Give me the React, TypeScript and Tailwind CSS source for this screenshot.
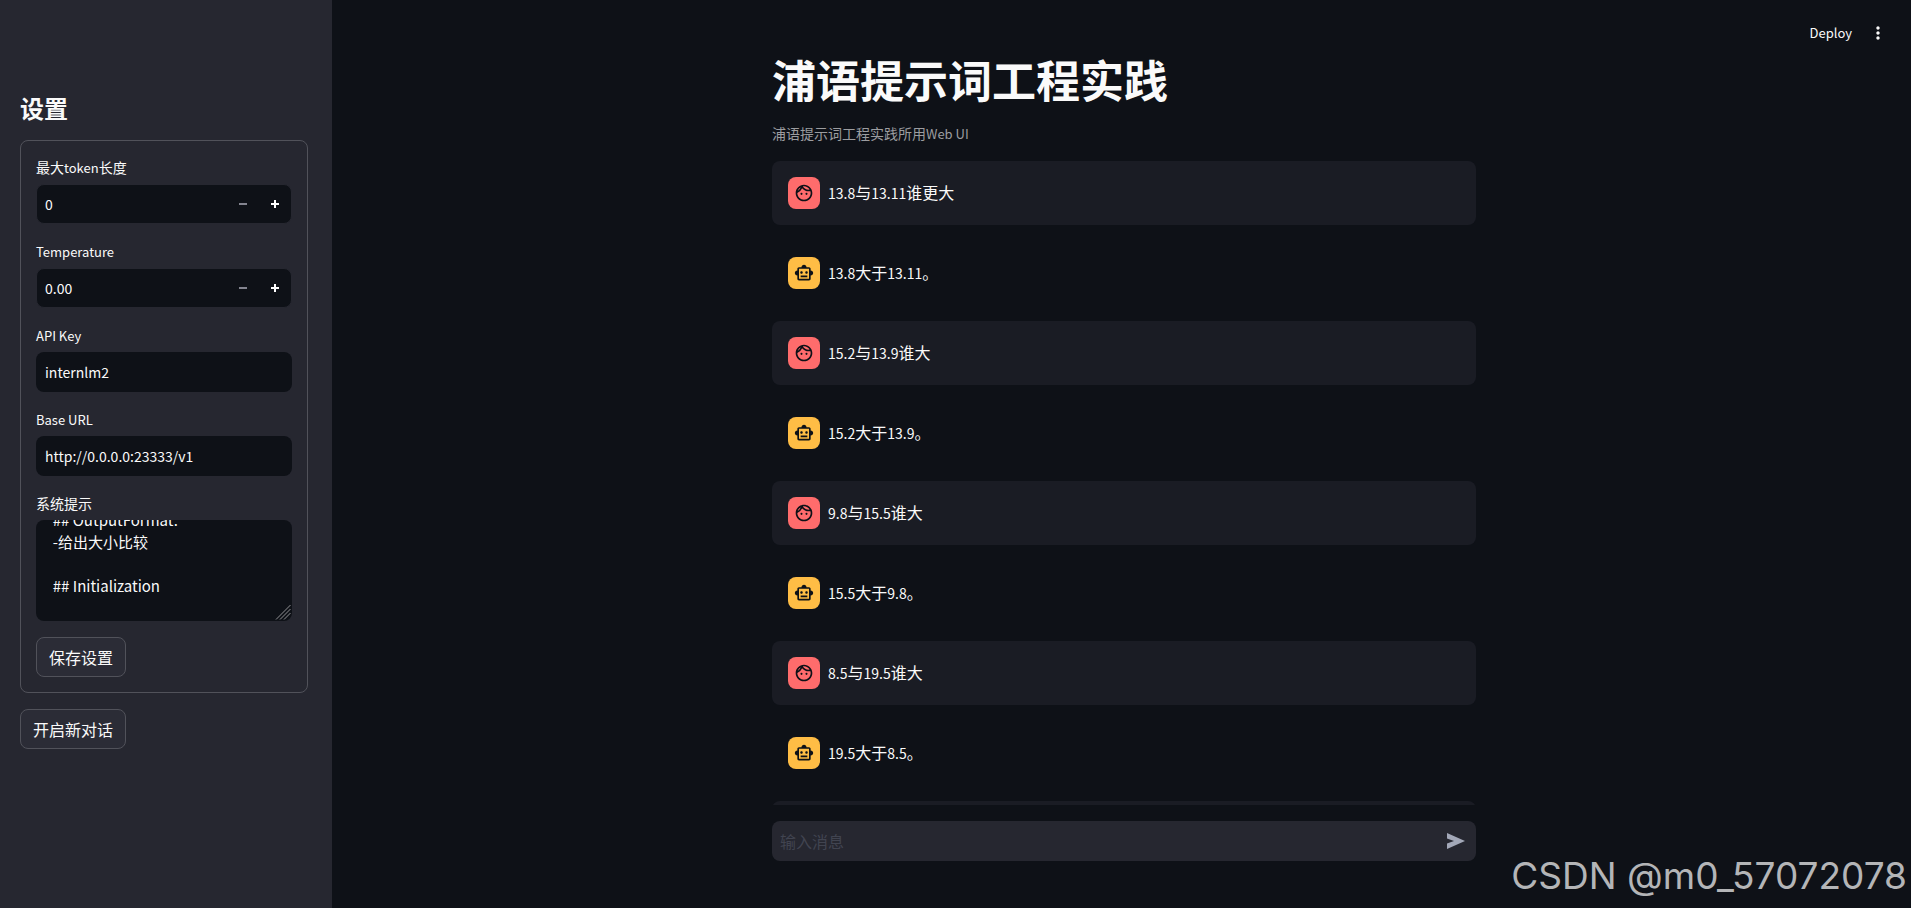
import React, { useEffect, useRef, useState } from 'react';
import { MdMoreVert, MdOutlineFace, MdOutlineSmartToy } from 'react-icons/md';

interface Message {
  role: 'user' | 'assistant';
  content: string;
}

const messages: Message[] = [
  { role: 'user', content: '13.8与13.11谁更大' },
  { role: 'assistant', content: '13.8大于13.11。' },
  { role: 'user', content: '15.2与13.9谁大' },
  { role: 'assistant', content: '15.2大于13.9。' },
  { role: 'user', content: '9.8与15.5谁大' },
  { role: 'assistant', content: '15.5大于9.8。' },
  { role: 'user', content: '8.5与19.5谁大' },
  { role: 'assistant', content: '19.5大于8.5。' },
  { role: 'user', content: '' },
];

const defaultPrompt = '  ## OutputFormat:\n  -给出大小比较\n\n  ## Initialization\n';

// Latin runs are set a little smaller than the Chinese around them
const MixedText = ({ text, latin }: { text: string; latin: string }) => (
  <>
    {text.split(/([\x20-\x7e]+)/).map((part, index) =>
      index % 2 === 1 ? (
        <span key={index} className={latin}>
          {part}
        </span>
      ) : (
        part
      )
    )}
  </>
);

interface FieldProps {
  id: string;
  label: string;
  children: React.ReactNode;
}

const Field = ({ id, label, children }: FieldProps) => (
  <div>
    <label htmlFor={id} className="mb-1 block h-6 text-sm leading-[22px]">
      <MixedText text={label} latin="text-[13px]" />
    </label>
    {children}
  </div>
);

interface NumberInputProps {
  id: string;
  value: number;
  step: number;
  digits: number;
  onChange: (value: number) => void;
}

const NumberInput = ({ id, value, step, digits, onChange }: NumberInputProps) => (
  <div className="flex h-10 overflow-hidden rounded-lg border border-[#262730] bg-[#0e1117]">
    <input
      id={id}
      type="text"
      inputMode="decimal"
      value={value.toFixed(digits)}
      onChange={(e) => onChange(Number(e.target.value) || 0)}
      className="min-w-0 flex-1 bg-transparent px-2 text-sm outline-none"
    />
    <button
      type="button"
      aria-label="-"
      disabled={value <= 0}
      onClick={() => onChange(Math.max(0, value - step))}
      className="flex w-8 items-center justify-center text-white disabled:text-[#83848f]"
    >
      <svg viewBox="0 0 8 8" className="size-2" fill="currentColor">
        <path d="M0 3h8v2H0z" />
      </svg>
    </button>
    <button
      type="button"
      aria-label="+"
      onClick={() => onChange(value + step)}
      className="flex w-8 items-center justify-center text-white"
    >
      <svg viewBox="0 0 8 8" className="size-2" fill="currentColor">
        <path d="M3 0v3H0v2h3v3h2V5h3V3H5V0z" />
      </svg>
    </button>
  </div>
);

const inputClass = 'block h-10 w-full rounded-lg bg-[#0e1117] px-[9px] text-sm outline-none';
const buttonClass = 'h-10 rounded-lg border border-[#51525a] bg-[#2b2c36] px-3 pb-px text-base';

const Sidebar = () => {
  const [maxTokens, setMaxTokens] = useState(0);
  const [temperature, setTemperature] = useState(0);
  const [apiKey, setApiKey] = useState('internlm2');
  const [baseUrl, setBaseUrl] = useState('http://0.0.0.0:23333/v1');
  const [prompt, setPrompt] = useState(defaultPrompt);
  const promptRef = useRef<HTMLTextAreaElement>(null);

  useEffect(() => {
    if (promptRef.current) {
      promptRef.current.scrollTop = 19;
    }
  }, []);

  return (
    <aside className="w-[332px] shrink-0 overflow-hidden bg-[#262730] pt-24 pr-6 pl-5">
      <h2 className="mb-5 text-2xl leading-6 font-bold">设置</h2>
      <form
        onSubmit={(e) => e.preventDefault()}
        className="mb-4 flex flex-col gap-4 rounded-lg border border-[#51525a] p-[15px]"
      >
        <Field id="max-tokens" label="最大token长度">
          <NumberInput id="max-tokens" value={maxTokens} step={1} digits={0} onChange={setMaxTokens} />
        </Field>
        <Field id="temperature" label="Temperature">
          <NumberInput id="temperature" value={temperature} step={0.01} digits={2} onChange={setTemperature} />
        </Field>
        <Field id="api-key" label="API Key">
          <input id="api-key" value={apiKey} onChange={(e) => setApiKey(e.target.value)} className={inputClass} />
        </Field>
        <Field id="base-url" label="Base URL">
          <input id="base-url" value={baseUrl} onChange={(e) => setBaseUrl(e.target.value)} className={inputClass} />
        </Field>
        <Field id="system-prompt" label="系统提示">
          <div className="relative">
            <textarea
              id="system-prompt"
              ref={promptRef}
              value={prompt}
              onChange={(e) => setPrompt(e.target.value)}
              className="block h-[101px] w-full resize-y rounded-lg bg-[#0e1117] px-[10px] py-2 text-[15px] leading-[22px] outline-none [scrollbar-width:none] [&::-webkit-resizer]:hidden"
            />
            <svg
              viewBox="0 0 16 16"
              className="pointer-events-none absolute right-px bottom-px size-4"
              stroke="#8f9093"
              fill="none"
            >
              <path d="M1 15.500L15.500 1M5 15.500L15.500 5M9 15.500L15.500 9" />
            </svg>
          </div>
        </Field>
        <button type="submit" className={`self-start ${buttonClass}`}>
          保存设置
        </button>
      </form>
      <button type="button" className={buttonClass}>
        开启新对话
      </button>
    </aside>
  );
};

const ChatMessage = ({ role, content }: Message) => (
  <div
    className={`flex min-h-16 shrink-0 items-start gap-2 rounded-lg p-4 ${
      role === 'user' ? 'bg-[#1a1c24]' : ''
    }`}
  >
    <div
      className={`flex size-8 shrink-0 items-center justify-center rounded-lg text-[#0e1117] ${
        role === 'user' ? 'bg-[#ff6c6c]' : 'bg-[#ffbd45]'
      }`}
    >
      {role === 'user' ? <MdOutlineFace size={20} /> : <MdOutlineSmartToy size={20} />}
    </div>
    <p className="text-base leading-[30px]">
      <MixedText text={content} latin="text-sm" />
    </p>
  </div>
);

export default function App() {
  const [draft, setDraft] = useState('');

  return (
    <div className="relative flex h-screen overflow-hidden bg-[#0e1117] font-['Noto_Sans_CJK_SC',sans-serif] text-[#fafafa]">
      <Sidebar />

      <main className="flex min-w-0 flex-1 flex-col pl-[5px]">
        <div className="min-h-0 flex-1 overflow-hidden">
          <div className="mx-auto flex w-full max-w-[704px] flex-col gap-4 pt-[52px]">
            <h1 className="text-[44px] leading-[54px] font-bold">浦语提示词工程实践</h1>
            <p className="h-[23px] text-sm leading-[22px] text-[#9c9da0]">
              <MixedText text="浦语提示词工程实践所用Web UI" latin="text-[13px]" />
            </p>
            {messages.map((message, index) => (
              <ChatMessage key={index} {...message} />
            ))}
          </div>
        </div>

        <div className="mx-auto w-full max-w-[704px] pt-4 pb-[47px]">
          <form
            onSubmit={(e) => e.preventDefault()}
            className="flex h-10 items-center rounded-lg bg-[#262730]"
          >
            <input
              type="text"
              aria-label="输入消息"
              placeholder="输入消息"
              value={draft}
              onChange={(e) => setDraft(e.target.value)}
              className="min-w-0 flex-1 bg-transparent px-2 text-base outline-none placeholder:text-[#414450]"
            />
            <button type="submit" aria-label="发送" className="flex size-10 items-center justify-center text-[#a3a8b8]">
              <svg viewBox="0 0 18 16" className="h-4 w-[18px]" fill="currentColor">
                <path d="M0 0v5.500l7 2.500-7 2.500V16l18-8z" />
              </svg>
            </button>
          </form>
        </div>
      </main>

      <header className="absolute top-0 right-0 flex h-[66px] items-center gap-4 pr-[23px]">
        <button type="button" className="text-[13px]">
          Deploy
        </button>
        <button type="button" aria-label="菜单">
          <MdMoreVert size={20} />
        </button>
      </header>

      <div className="pointer-events-none absolute right-1 bottom-2 font-[Inter,sans-serif] text-[37px] leading-12 text-[#b4b5b7] [font-feature-settings:'calt'_0]">
        CSDN @m0_57072078
      </div>
    </div>
  );
}
